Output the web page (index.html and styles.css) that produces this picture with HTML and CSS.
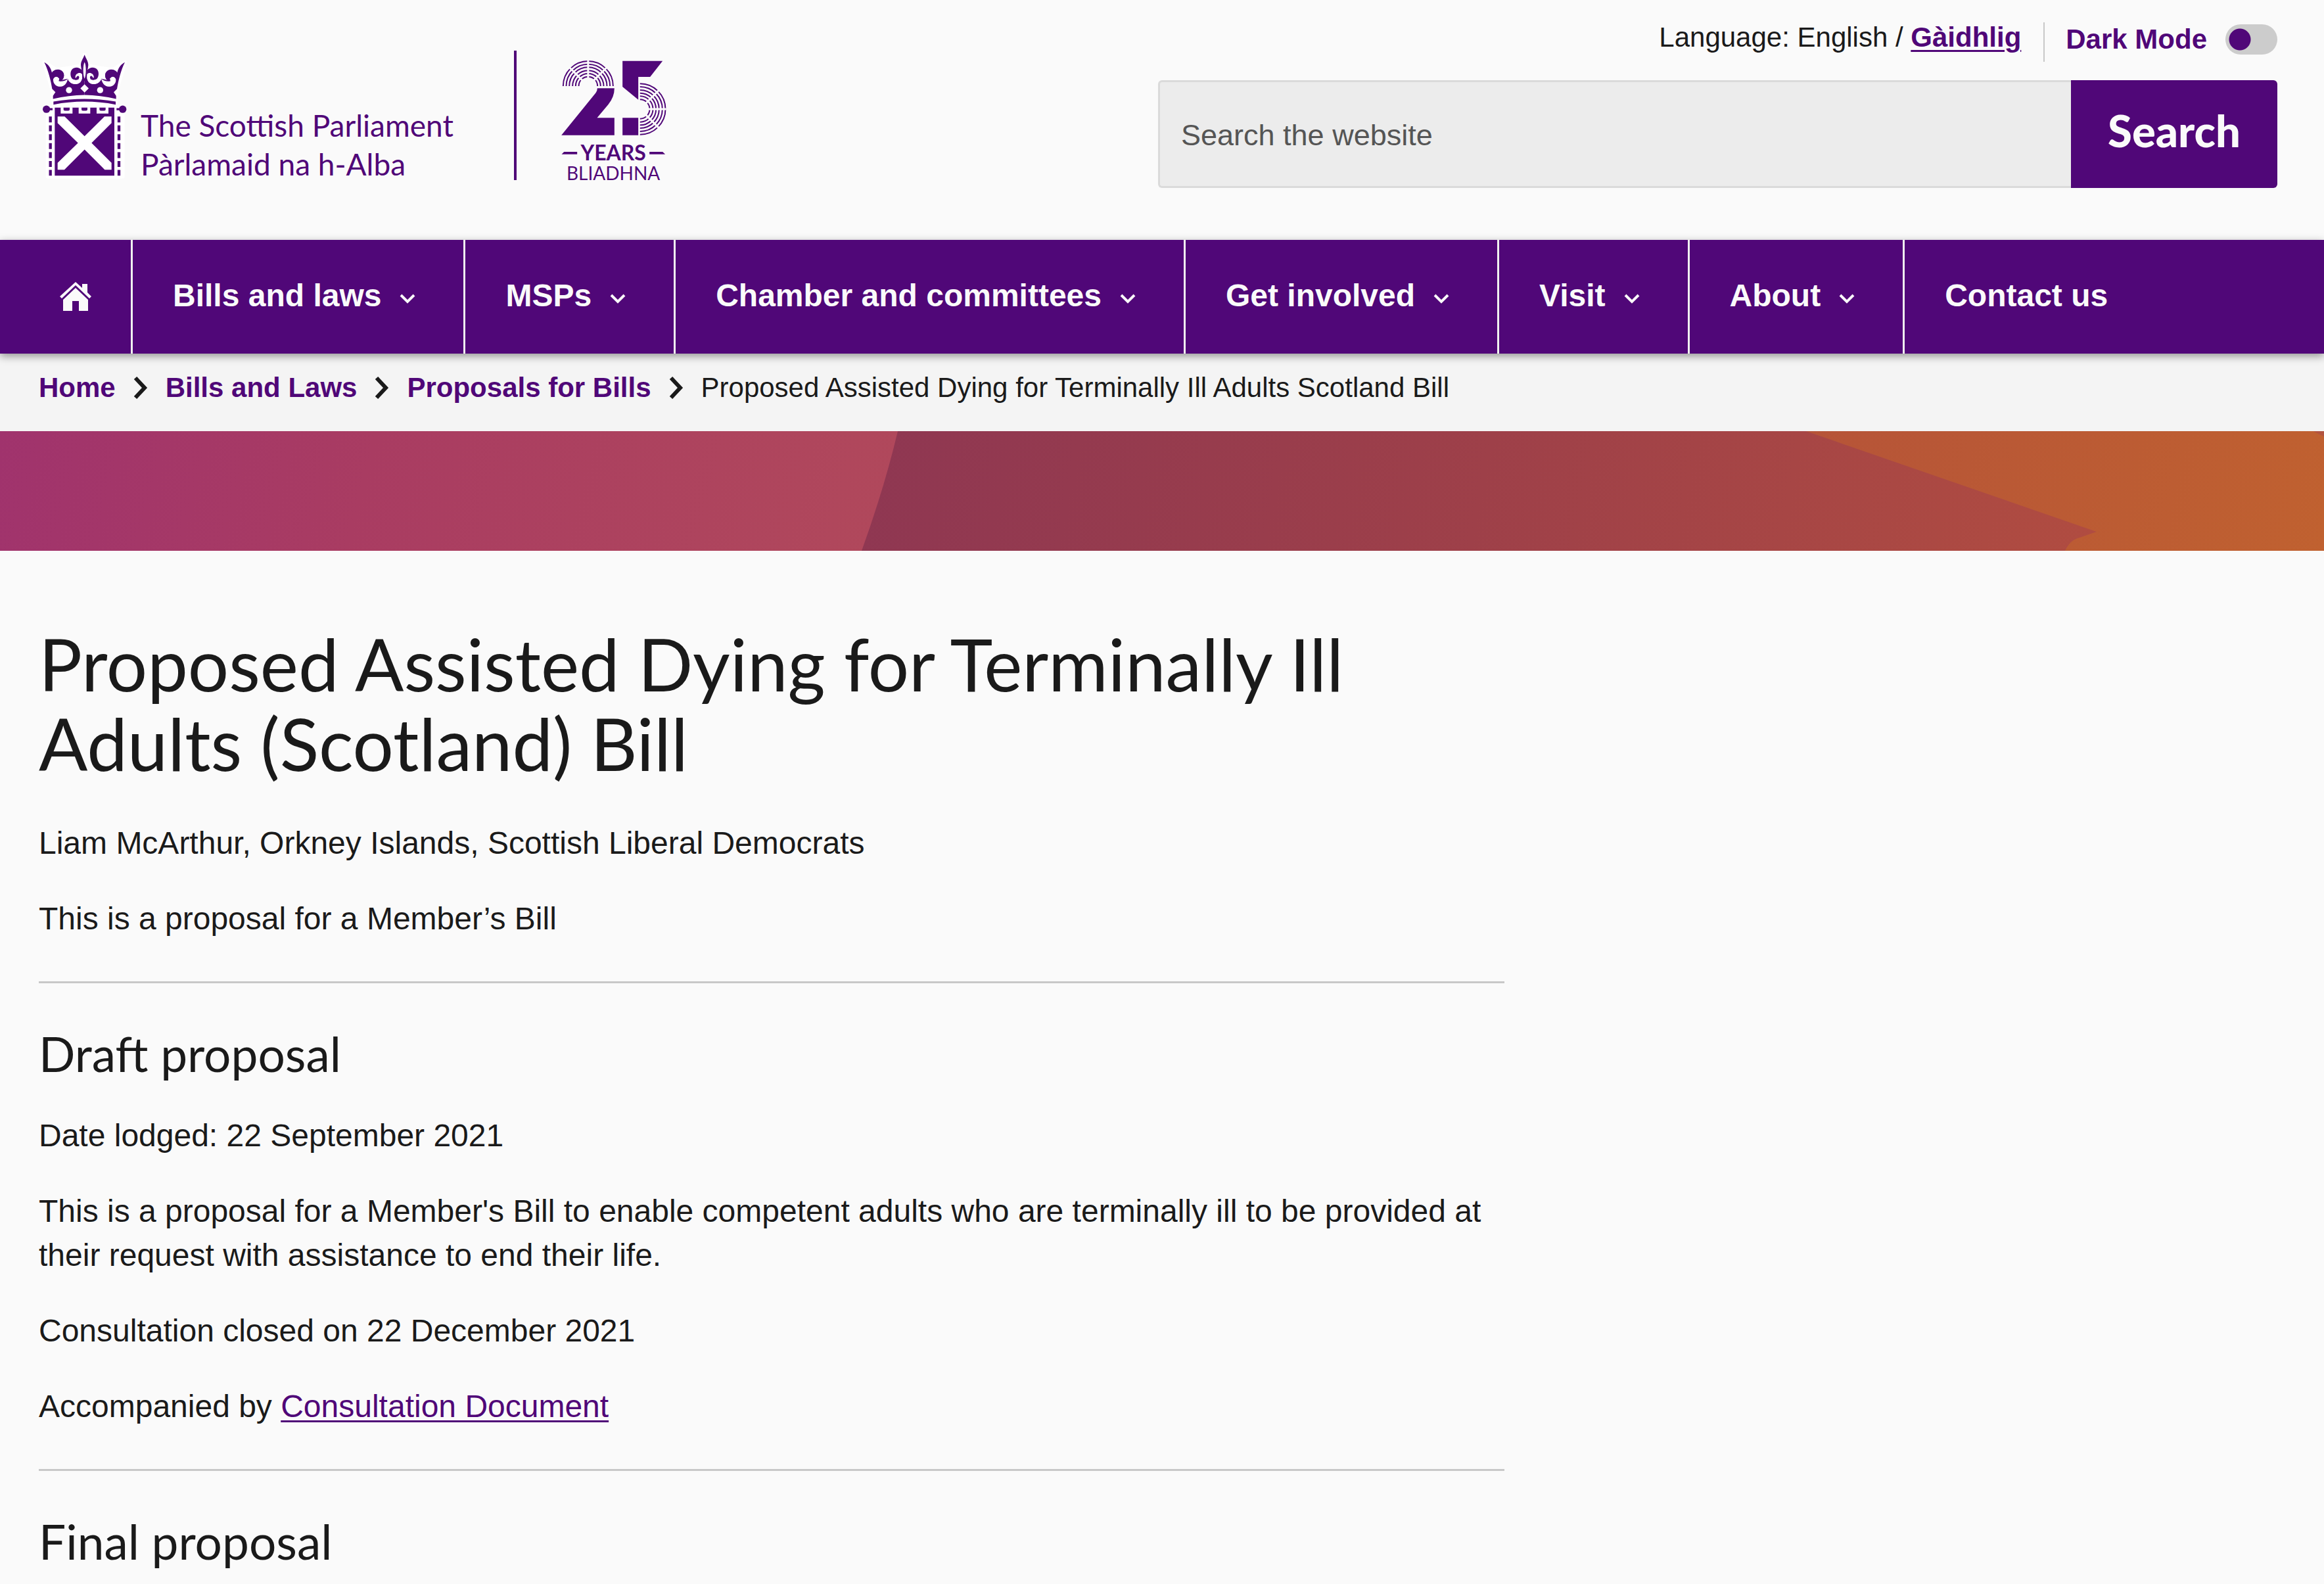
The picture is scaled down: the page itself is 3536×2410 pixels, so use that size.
FILE: index.html
```html
<!DOCTYPE html>
<html lang="en">
<head>
<meta charset="utf-8">
<meta name="viewport" content="width=device-width, initial-scale=1">
<title>Proposed Assisted Dying for Terminally Ill Adults (Scotland) Bill | Scottish Parliament</title>
<link rel="stylesheet" href="styles.css">
</head>
<body>
<header class="masthead">
  <a class="brand" href="#" aria-label="The Scottish Parliament home">
    <svg class="brand-crest" viewBox="42 34 390 572" aria-hidden="true">
      <defs>
        <g id="crown-half">
          <path fill="#500778" d="M52 75C70 84 82 100 87 122C96 106 118 104 131 113C146 124 145 146 132 156L160 150C166 164 178 174 192 174C208 174 216 164 222 154L222 150H236V224Q164 226 92 242L92 228L103 211L88 196C82 160 70 110 52 75Z"/>
          <path fill="#fff" d="M118 147C106 132 92 142 93 158C95 177 110 187 127 186C143 185 155 172 160 150C152 158 140 162 128 162C118 162 118 155 122 149Z"/>
          <path fill="#500778" d="M87 122C98 104 130 103 140 124C147 144 134 161 118 161L121 150C112 136 100 140 94 150Z"/>
          <path fill="#fff" d="M160 150C166 141 174 141 178 148C184 154 190 154 197 150C194 138 202 126 214 126C222 128 227 140 224 150C220 170 206 176 192 174C176 173 165 164 160 150Z"/>
          <path fill="#500778" d="M226 130C214 117 196 126 194 140C192 146 198 151 210 150C208 162 194 161 184 154C170 144 168 120 179 107C191 94 215 97 224 112Z"/>
          <path fill="#fff" d="M213 150C203 156 192 156 184 153C176 150 172 150 170 144L160 152C166 168 182 176 198 173C214 171 224 160 226 140L219 129Z"/>
          <path fill="#500778" d="M199 142C204 134 210 136 211 142C212 152 202 158 192 154Z"/>
          <circle cx="165" cy="202" r="14" fill="#fff"/>
        </g>
      </defs>
      <path fill="#fff" stroke="#fff" stroke-width="18" stroke-linejoin="round" d="M52 75L88 196L96 268H376L384 196L420 75L364 110L300 100L252 90L236 40L220 90L172 100L108 110ZM62 282H410V596H68V290Z"/>
      <use href="#crown-half"/>
      <use href="#crown-half" transform="matrix(-1 0 0 1 472 0)"/>
      <path fill="#500778" d="M236 40C242 58 252 66 253 86C253 100 245 122 247 150L236 160L225 150C227 122 219 100 219 86C220 66 230 58 236 40Z"/>
      <path fill="#fff" d="M236 74C244 90 244 132 236 150C228 132 228 90 236 74ZM236 175L255 194L236 213L217 194Z"/>
      <path fill="#500778" d="M94 254Q236 230 378 254V268Q236 240 94 268Z"/>
      <path fill="#500778" d="M100 282H372V592H100ZM76 284H90V294H76ZM382 284H396V294H382Z"/>
      <circle cx="62" cy="289" r="17" fill="#500778"/>
      <circle cx="410" cy="289" r="17" fill="#500778"/>
      <path fill="#fff" d="M127 280H181V309H127ZM209 280H262V309H209ZM291 280H345V309H291Z"/>
      <path fill="#500778" d="M140 282H168V292Q166 296 160 296H148Q142 296 140 292ZM222 282H249V292Q247 296 241 296H230Q224 296 222 292ZM304 282H332V292Q330 296 324 296H312Q306 296 304 292Z"/>
      <path fill="#fff" d="M113 322H145L236 412L327 322H359V352L268 443L359 534V565H328L236 473L144 565H113V534L206 443L113 352Z"/>
      <path stroke="#500778" stroke-width="13" stroke-dasharray="27 13.7" d="M80 322V592M393 322V592"/>
    </svg>
    <span class="brand-name"><span>The Scottish Parliament</span><span lang="gd">Pàrlamaid na h-Alba</span></span>
    <svg class="brand-anniversary" viewBox="280 90 482 576" role="img" aria-label="25 years">
      <g fill="none" stroke="#500778" stroke-width="6">
        <path d="M291 210A114 114 0 0 1 519 210M305 210A100 100 0 0 1 505 210M319 210A86 86 0 0 1 491 210M334 210A71 71 0 0 1 476 210M348 210A57 57 0 0 1 462 210M362 210A43 43 0 0 1 448 210"/>
        <path d="M642 199A116 116 0 0 1 642 431M642 213A102 102 0 0 1 642 417M642 228A87 87 0 0 1 642 402M642 242A73 73 0 0 1 642 388M642 256A59 59 0 0 1 642 374M642 271A44 44 0 0 1 642 359"/>
      </g>
      <path stroke="#fafafa" stroke-width="9" d="M405 92V190M318 123L382 187M492 123L428 187M670 315H762M662 295L730 227M662 335L730 403"/>
      <path fill="#500778" d="M447 220H525Q525 260 497 294L446 355H525V434H283L440 241Q447 232 447 220ZM562 95H745L688 168H634V272L562 213ZM562 355H634V434H562ZM295 510H355V521H284ZM685 510H745L757 521H685Z"/>
      <text class="years" x="520" y="548">YEARS</text>
      <text class="bliadhna" x="520" y="640">BLIADHNA</text>
    </svg>
  </a>
  <div class="tools">
    <div class="preferences">
      <p class="language">Language: English / <a href="#" lang="gd">Gàidhlig</a></p>
      <label class="dark-mode">Dark Mode <input class="switch" type="checkbox" role="switch"></label>
    </div>
    <form class="search" role="search">
      <input class="search-input" type="search" placeholder="Search the website" aria-label="Search the website">
      <button class="search-button" type="submit">Search</button>
    </form>
  </div>
</header>
<nav class="main-nav" aria-label="Main">
  <a class="nav-home" href="#" aria-label="Home"><svg class="home-icon" viewBox="0 0 48 44" aria-hidden="true"><path fill="#fafafa" d="M24 0L34 9V3H42V16L48 22L45 25L24 5L3 25L0 22Z"/><path fill="#fafafa" d="M24 9L43 27V44H29V29H19V44H5V27Z"/></svg></a>
  <button class="nav-item" type="button">Bills and laws<svg class="caret" viewBox="0 0 24 16" aria-hidden="true"><path d="M2 2L12 12L22 2"/></svg></button>
  <button class="nav-item" type="button">MSPs<svg class="caret" viewBox="0 0 24 16" aria-hidden="true"><path d="M2 2L12 12L22 2"/></svg></button>
  <button class="nav-item" type="button">Chamber and committees<svg class="caret" viewBox="0 0 24 16" aria-hidden="true"><path d="M2 2L12 12L22 2"/></svg></button>
  <button class="nav-item" type="button">Get involved<svg class="caret" viewBox="0 0 24 16" aria-hidden="true"><path d="M2 2L12 12L22 2"/></svg></button>
  <button class="nav-item" type="button">Visit<svg class="caret" viewBox="0 0 24 16" aria-hidden="true"><path d="M2 2L12 12L22 2"/></svg></button>
  <button class="nav-item" type="button">About<svg class="caret" viewBox="0 0 24 16" aria-hidden="true"><path d="M2 2L12 12L22 2"/></svg></button>
  <a class="nav-item" href="#">Contact us</a>
</nav>
<nav class="breadcrumb" aria-label="Breadcrumb">
  <a href="#">Home</a>
  <svg class="crumb-arrow" viewBox="0 0 24 36" aria-hidden="true"><path d="M4 3L18 18L4 33"/></svg>
  <a href="#">Bills and Laws</a>
  <svg class="crumb-arrow" viewBox="0 0 24 36" aria-hidden="true"><path d="M4 3L18 18L4 33"/></svg>
  <a href="#">Proposals for Bills</a>
  <svg class="crumb-arrow" viewBox="0 0 24 36" aria-hidden="true"><path d="M4 3L18 18L4 33"/></svg>
  <span aria-current="page">Proposed Assisted Dying for Terminally Ill Adults Scotland Bill</span>
</nav>
<svg class="banner" viewBox="0 0 3536 182" preserveAspectRatio="xMidYMid slice" aria-hidden="true">
  <defs>
    <linearGradient id="pink" gradientUnits="userSpaceOnUse" x1="0" y1="0" x2="1340" y2="360"><stop offset="0" stop-color="#a0336d"/><stop offset=".4" stop-color="#a93c62"/><stop offset="1" stop-color="#b1495b"/></linearGradient>
    <linearGradient id="wine" gradientUnits="userSpaceOnUse" x1="1330" y1="0" x2="3140" y2="360"><stop offset="0" stop-color="#8f3752"/><stop offset=".5" stop-color="#9e4049"/><stop offset="1" stop-color="#b04c41"/></linearGradient>
    <linearGradient id="orange" gradientUnits="userSpaceOnUse" x1="2750" y1="0" x2="3536" y2="182"><stop offset="0" stop-color="#b65438"/><stop offset="1" stop-color="#c06130"/></linearGradient>
  </defs>
  <rect width="3536" height="182" fill="url(#wine)"/>
  <path fill="url(#pink)" d="M0 0H1366Q1345 88 1311 182H0Z"/>
  <path fill="url(#orange)" d="M2748 0H3520L3536 8V182H3142Q3150 165 3164 162L3190 153Z"/>
  <path fill="#b25440" d="M3520 0H3536V8Z"/>
</svg>
<main class="content">
  <h1>Proposed Assisted Dying for Terminally Ill Adults (Scotland) Bill</h1>
  <p>Liam McArthur, Orkney Islands, Scottish Liberal Democrats</p>
  <p>This is a proposal for a Member’s Bill</p>
  <section class="stage">
    <h2>Draft proposal</h2>
    <p>Date lodged: 22 September 2021</p>
    <p>This is a proposal for a Member's Bill to enable competent adults who are terminally ill to be provided at their request with assistance to end their life.</p>
    <p>Consultation closed on 22 December 2021</p>
    <p>Accompanied by <a href="#">Consultation Document</a></p>
  </section>
  <section class="stage">
    <h2>Final proposal</h2>
  </section>
</main>
</body>
</html>
```
FILE: styles.css
```css
:root {
  --purple: #500778;
  --ink: #1a1a1a;
  --paper: #fafafa;
  --rule: #c8c8c8;
  --sans: "Liberation Sans", Arial, sans-serif;
  --display: Lato, sans-serif;
}

* {
  box-sizing: border-box;
}

body {
  margin: 0;
  background: var(--paper);
  color: var(--ink);
  font: 48px/67px var(--sans);
  overflow-x: hidden;
}

p,
h1,
h2 {
  margin: 0;
}

a {
  color: var(--purple);
  text-decoration-thickness: 3px;
  text-underline-offset: 5px;
}

/* Masthead */
.masthead {
  display: flex;
  justify-content: space-between;
  align-items: flex-start;
  padding: 34px 71px 79px 64px;
}

.brand {
  display: flex;
  align-items: flex-start;
  padding-top: 43px;
  color: var(--purple);
  text-decoration: none;
}

.brand-crest {
  width: 130px;
  height: 191px;
  margin-top: 4px;
}

.brand-name {
  display: grid;
  align-content: end;
  gap: 11px;
  height: 197px;
  margin-left: 20px;
  padding-right: 92px;
  border-right: 4px solid var(--purple);
  font: 46px/48px var(--display);
  white-space: nowrap;
}

.brand-anniversary {
  width: 161px;
  height: 192px;
  margin: 14px 0 0 67px;
}

.years,
.bliadhna {
  fill: var(--purple);
  font-family: var(--display);
  text-anchor: middle;
}

.years {
  font-size: 96px;
  font-weight: 700;
}

.bliadhna {
  font-size: 84px;
}

.tools {
  width: 52%;
  max-width: 1703px;
}

.preferences {
  display: flex;
  justify-content: flex-end;
  font-size: 42px;
  line-height: 60px;
}

.language {
  margin-top: -7px;
  padding-right: 34px;
}

.language a {
  font-weight: 700;
}

.dark-mode {
  display: flex;
  align-items: center;
  gap: 28px;
  height: 60px;
  padding: 0 0 8px 32px;
  border-left: 2px solid var(--rule);
  color: var(--purple);
  font-weight: 700;
  line-height: 50px;
}

.switch {
  appearance: none;
  width: 79px;
  height: 46px;
  margin: 0;
  border-radius: 23px;
  background: radial-gradient(circle at 22px 23px, var(--purple) 16px, #ccc 17px);
}

.search {
  display: flex;
  height: 164px;
  margin-top: 28px;
}

.search-input {
  appearance: none;
  flex: 1;
  min-width: 0;
  padding: 4px 32px 0;
  border: 3px solid #dadada;
  border-right: 0;
  border-radius: 6px 0 0 6px;
  background: #ececec;
  color: var(--ink);
  font: 45px var(--sans);
}

.search-input::placeholder {
  color: #555;
}

.search-button {
  padding: 0 56px 12px;
  border: 0;
  border-radius: 0 6px 6px 0;
  background: var(--purple);
  color: var(--paper);
  font: 900 67px var(--display);
}

/* Main navigation */
.main-nav {
  position: relative;
  display: flex;
  height: 173px;
  background: var(--purple);
  box-shadow: 0 4px 12px rgb(0 0 0 / 40%);
}

.nav-home {
  display: flex;
  align-items: center;
  padding: 0 60px 1px 91px;
}

.home-icon {
  width: 48px;
  height: 44px;
}

.nav-item {
  display: flex;
  align-items: center;
  padding: 0 73px 4px 61px;
  border: 0;
  border-left: 3px solid #f0f0f0;
  background: none;
  color: var(--paper);
  font: 700 48px/67px var(--sans);
  text-decoration: none;
  white-space: nowrap;
}

.caret {
  width: 24px;
  height: 16px;
  margin: 10px 0 0 28px;
  fill: none;
  stroke: var(--paper);
  stroke-width: 4;
}

/* Breadcrumb */
.breadcrumb {
  display: flex;
  align-items: center;
  gap: 26px;
  padding: 22px 59px 36px;
  background: #f4f4f4;
  font-size: 42px;
  line-height: 60px;
}

.breadcrumb a {
  font-weight: 700;
  text-decoration: none;
}

.crumb-arrow {
  width: 24px;
  height: 36px;
  fill: none;
  stroke: var(--ink);
  stroke-width: 6;
}

.banner {
  display: block;
  width: 100%;
  height: 182px;
}

/* Proposal */
.content {
  max-width: 2348px;
  padding: 111px 59px 0;
}

h1,
h2 {
  font-family: var(--display);
  font-weight: 400;
}

h1 {
  font-size: 110px;
  line-height: 121px;
  margin-bottom: 58px;
}

h2 {
  font-size: 73px;
  line-height: 80px;
  margin-bottom: 51px;
}

p + p {
  margin-top: 48px;
}

.stage {
  margin-top: 62px;
  padding-top: 67px;
  border-top: 3px solid var(--rule);
}
```
